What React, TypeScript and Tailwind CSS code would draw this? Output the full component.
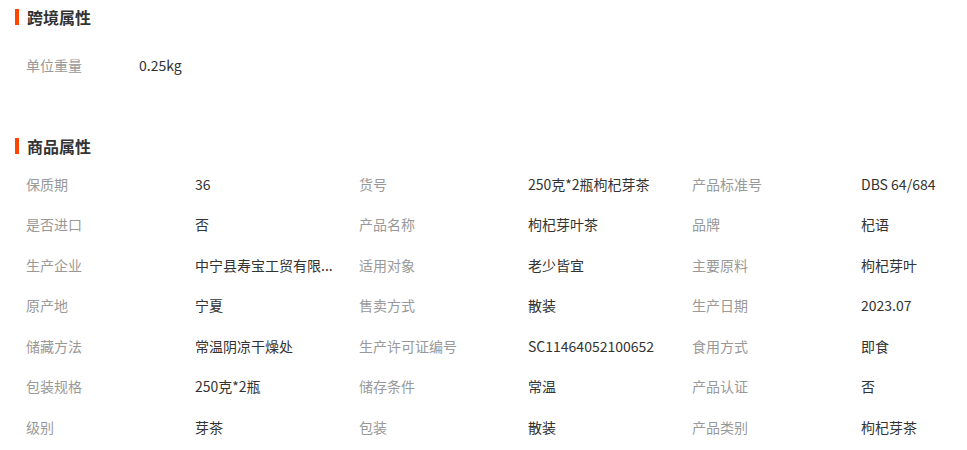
import React from 'react';

type Attr = { label: string; value: string };

const crossBorder: Attr[] = [{ label: '单位重量', value: '0.25kg' }];

const productAttrs: Attr[] = [
  { label: '保质期', value: '36' },
  { label: '货号', value: '250克*2瓶枸杞芽茶' },
  { label: '产品标准号', value: 'DBS 64/684' },
  { label: '是否进口', value: '否' },
  { label: '产品名称', value: '枸杞芽叶茶' },
  { label: '品牌', value: '杞语' },
  { label: '生产企业', value: '中宁县寿宝工贸有限...' },
  { label: '适用对象', value: '老少皆宜' },
  { label: '主要原料', value: '枸杞芽叶' },
  { label: '原产地', value: '宁夏' },
  { label: '售卖方式', value: '散装' },
  { label: '生产日期', value: '2023.07' },
  { label: '储藏方法', value: '常温阴凉干燥处' },
  { label: '生产许可证编号', value: 'SC11464052100652' },
  { label: '食用方式', value: '即食' },
  { label: '包装规格', value: '250克*2瓶' },
  { label: '储存条件', value: '常温' },
  { label: '产品认证', value: '否' },
  { label: '级别', value: '芽茶' },
  { label: '包装', value: '散装' },
  { label: '产品类别', value: '枸杞芽茶' },
];

const SectionTitle: React.FC<{ title: string }> = ({ title }) => (
  <div className="h-[34px] flex items-center pl-[15px]">
    <span className="w-[4px] h-[16px] bg-[#ff4400] mr-[8px]" />
    <span className="text-[16px] font-bold text-[#333]">{title}</span>
  </div>
);

const App: React.FC = () => {
  return (
    <div
      className="w-[967px] h-[450px] bg-white overflow-hidden"
      style={{ fontFamily: '"Noto Sans CJK SC", "Noto Sans", sans-serif' }}
    >
      <SectionTitle title="跨境属性" />
      <div className="mt-[11px] pl-[26px]">
        {crossBorder.map((a) => (
          <div key={a.label} className="h-[40px] flex items-center text-[14px]">
            <span className="w-[113px] text-[#999]">{a.label}</span>
            <span className="text-[#333]">{a.value}</span>
          </div>
        ))}
      </div>

      <div className="mt-[44px]">
        <SectionTitle title="商品属性" />
        <div className="mt-[1px] pl-[26px] grid grid-cols-[333px_333px_275px]">
          {productAttrs.map((a) => (
            <div key={a.label} className="h-[40.5px] flex items-center text-[14px]">
              <span className="w-[169px] shrink-0 text-[#999]">{a.label}</span>
              <span className="w-[150px] whitespace-nowrap text-[#333]">{a.value}</span>
            </div>
          ))}
        </div>
      </div>
    </div>
  );
};

export default App;
